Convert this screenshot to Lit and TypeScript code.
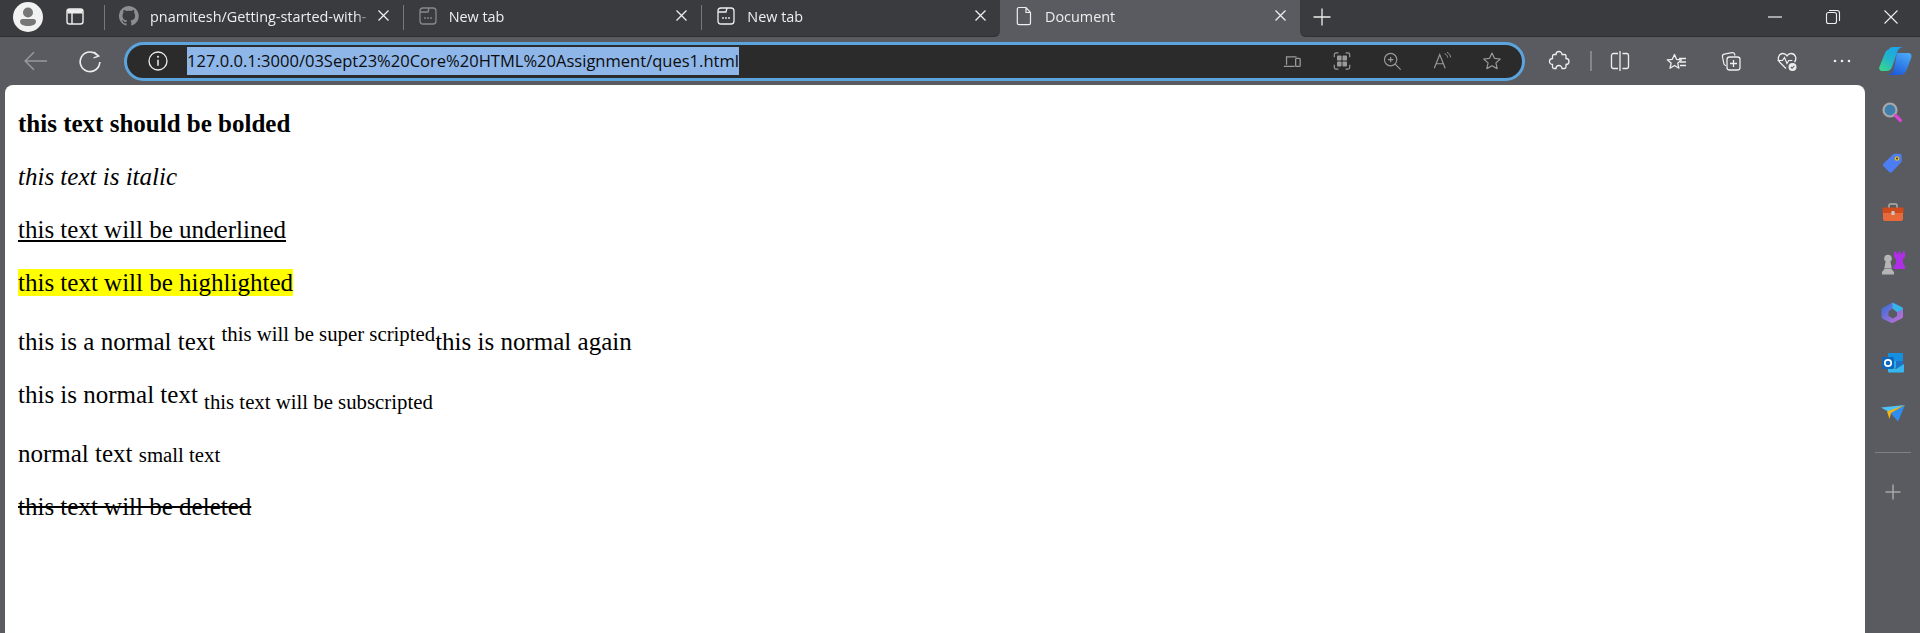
import { LitElement, html, css, svg } from "lit";
import { customElement } from "lit/decorators.js";

const ICONS: Record<string, unknown> = {
  sidebarToggle: svg`<rect x="3" y="3" width="16" height="15" rx="2.5" fill="none" stroke="#eee" stroke-width="1.4"/><path d="M3.5 7.500h15V5a1.800 1.800 0 0 0-1.800-1.800H5.300A1.800 1.800 0 0 0 3.500 5z" fill="#eee"/><path d="M8 7v11" stroke="#eee" stroke-width="1.4"/>`,
  github: svg`<path fill="#8c8d90" d="M11 1a10 10 0 0 0-3.200 19.500c.5.100.7-.2.7-.5v-1.700c-2.800.6-3.400-1.300-3.400-1.300-.5-1.200-1.100-1.500-1.100-1.500-.9-.6.1-.6.1-.6 1 .1 1.500 1 1.500 1 .9 1.500 2.300 1.100 2.900.8.100-.7.400-1.100.6-1.300-2.200-.3-4.600-1.100-4.600-5 0-1.100.4-2 1-2.700-.1-.3-.4-1.300.1-2.700 0 0 .8-.3 2.700 1a9.500 9.500 0 0 1 5 0c1.900-1.300 2.700-1 2.700-1 .5 1.400.2 2.400.1 2.700.6.7 1 1.600 1 2.700 0 3.900-2.300 4.700-4.600 5 .4.300.7.900.7 1.900V20c0 .3.200.6.700.5A10 10 0 0 0 11 1z"/>`,
  pageDim: svg`<rect x="3" y="3" width="16" height="16" rx="3" fill="none" stroke="#88898c" stroke-width="1.300"/><path d="M3 7h8l1-4" fill="none" stroke="#88898c" stroke-width="1.300"/><circle cx="8" cy="13" r=".9" fill="#88898c"/><circle cx="11" cy="13" r=".9" fill="#88898c"/><circle cx="14" cy="13" r=".9" fill="#88898c"/>`,
  pageLit: svg`<rect x="3" y="3" width="16" height="16" rx="3" fill="none" stroke="#eee" stroke-width="1.300"/><path d="M3 7h8l1-4" fill="none" stroke="#eee" stroke-width="1.300"/><circle cx="8" cy="13" r=".9" fill="#eee"/><circle cx="11" cy="13" r=".9" fill="#eee"/><circle cx="14" cy="13" r=".9" fill="#eee"/>`,
  doc: svg`<path d="M6 2.500h7l4.500 5V18a1.700 1.700 0 0 1-1.700 1.700H6A1.700 1.700 0 0 1 4.300 18V4.200A1.700 1.700 0 0 1 6 2.500zM13 2.700V7.500h4.500" fill="none" stroke="#eee" stroke-width="1.200"/>`,
  close: svg`<path d="M5.500 5.500l10 10M15.500 5.500l-10 10" stroke="#eee" stroke-width="1.300"/>`,
  plus: svg`<path d="M11 2.500v17M2.500 11h17" stroke="#eee" stroke-width="1.300"/>`,
  minimize: svg`<path d="M4 11h14" stroke="#eee" stroke-width="1.200"/>`,
  restore: svg`<rect x="4.500" y="6.500" width="10" height="11" rx="2" fill="none" stroke="#eee" stroke-width="1.100"/><path d="M7 4.500h8a2.500 2.500 0 0 1 2.500 2.500v8" fill="none" stroke="#eee" stroke-width="1.100"/>`,
  winClose: svg`<path d="M4.500 4.500l13 13M17.500 4.500l-13 13" stroke="#eee" stroke-width="1.100"/>`,
  back: svg`<path d="M2 11h20M10 3l-8 8 8 8" fill="none" stroke="#98999c" stroke-width="1.400"/>`,
  reload: svg`<path d="M17.500 5.500a9 9 0 1 0 2.500 6.500" fill="none" stroke="#eee" stroke-width="1.500"/><path d="M13.500 1.800l4.500 3.700-4.700 1.700" fill="none" stroke="#eee" stroke-width="1.300" transform="translate(1 1)"/>`,
  info: svg`<circle cx="11" cy="11" r="9" fill="none" stroke="#eee" stroke-width="1.300"/><path d="M11 9.800v6" stroke="#eee" stroke-width="1.500"/><circle cx="11" cy="6.700" r="1" fill="#eee"/>`,
  devices: svg`<path d="M5 15V6.500h11M2 17h12" fill="none" stroke="#9a9a9a" stroke-width="1.400"/><rect x="15" y="8" width="5" height="9" rx="1" fill="none" stroke="#9a9a9a" stroke-width="1.400"/>`,
  apps: svg`<path d="M2.500 7V4a2 2 0 0 1 2-2H7M15 2h2.500a2 2 0 0 1 2 2v3M19.500 15v3a2 2 0 0 1-2 2H15M7 20H4.500a2 2 0 0 1-2-2v-3" fill="none" stroke="#9a9a9a" stroke-width="1.300"/><rect x="5.500" y="5" width="5" height="5.500" rx="1" fill="#9a9a9a"/><rect x="11.500" y="5" width="5" height="5.500" rx="1" fill="#9a9a9a"/><rect x="5.500" y="11.500" width="5" height="5.500" rx="1" fill="#9a9a9a"/><rect x="11.500" y="11.500" width="5" height="5.500" rx="1" fill="#9a9a9a"/>`,
  zoomIn: svg`<circle cx="9.500" cy="9.500" r="6.800" fill="none" stroke="#9a9a9a" stroke-width="1.300"/><path d="M14.500 14.500l6 6M6.500 9.500h6M9.500 6.500v6" stroke="#9a9a9a" stroke-width="1.300"/>`,
  readAloud: svg`<path d="M2.500 19l6-15 6 15M4.700 14h7.600" fill="none" stroke="#9a9a9a" stroke-width="1.300"/><path d="M14 3c2 .8 3 2.300 3.300 4.300M16.500 1.500c2.300 1 3.700 3 4 5.500" fill="none" stroke="#9a9a9a" stroke-width="1.100"/>`,
  star: svg`<path d="M11 2.200l2.700 5.900 6.400.7-4.800 4.300 1.400 6.300L11 16.200l-5.700 3.200 1.400-6.300-4.800-4.300 6.400-.7z" fill="none" stroke="#9a9a9a" stroke-width="1.300" stroke-linejoin="round"/>`,
  puzzle: svg`<path d="M8 4.500a3 3 0 0 1 6 0h2.500a1.500 1.500 0 0 1 1.500 1.500v2.500a3 3 0 0 1 0 6V17a1.500 1.500 0 0 1-1.500 1.500H14a3 3 0 0 0-6 0H6A1.500 1.500 0 0 1 4.500 17v-2.500a3 3 0 0 1 0-6V6A1.500 1.500 0 0 1 6 4.500z" fill="none" stroke="#eee" stroke-width="1.300"/>`,
  split: svg`<path d="M9 3.500H4.500a2 2 0 0 0-2 2v11a2 2 0 0 0 2 2H9M13.500 3.500h4a2 2 0 0 1 2 2v11a2 2 0 0 1-2 2h-4M11 1v20" fill="none" stroke="#eee" stroke-width="1.300"/>`,
  favorites: svg`<path d="M9.500 3l2 4.800 5 .5-3.800 3.400 1.200 5-4.400-2.700L5 16.700l1.200-5L2.300 8.300l5-.5z" transform="translate(0 1.500)" fill="none" stroke="#eee" stroke-width="1.300" stroke-linejoin="round"/><path d="M14 8.500h7M15 12h6M15 15.500h6" stroke="#eee" stroke-width="1.300"/>`,
  collections: svg`<path d="M6 15.500c-1 0-1.700-.500-2-1.400L2.500 7c-.3-1.300.4-2.500 1.700-2.800L12 2.700c1.300-.2 2.300.4 2.700 1.600l.3 1.200" fill="none" stroke="#eee" stroke-width="1.200"/><rect x="7" y="7" width="13" height="13" rx="2.500" fill="none" stroke="#eee" stroke-width="1.300"/><path d="M13.500 10v7M10 13.500h7" stroke="#eee" stroke-width="1.300"/>`,
  health: svg`<path d="M10 18.500L4 12.500C.8 9.200 2.500 3.500 7 3.500c2 0 3.200 1 4 2.300.8-1.300 2-2.300 4-2.300 4.500 0 6.200 5 3.500 8.500" fill="none" stroke="#eee" stroke-width="1.300"/><path d="M1.500 10.500h5l2-3 2.500 6 1.800-3h3.500" fill="none" stroke="#eee" stroke-width="1.200"/><circle cx="16.500" cy="17" r="4" fill="#eee"/><path d="M14.800 17l1.300 1.300 2.200-2.500" fill="none" stroke="#5a5b60" stroke-width="1.100"/>`,
  more: svg`<circle cx="4" cy="11" r="1.300" fill="#eee"/><circle cx="11" cy="11" r="1.300" fill="#eee"/><circle cx="18" cy="11" r="1.300" fill="#eee"/>`,
  sidePlus: svg`<path d="M11 3.500v15M3.500 11h15" stroke="#a8a8a8" stroke-width="1.500"/>`,
};

// coloured ones are drawn on a 24 grid
const COLOR_ICONS: Record<string, unknown> = {
  search: svg`<circle cx="9" cy="9" r="6.500" fill="#3f7fae" stroke="#a8a8a8" stroke-width="2.200"/><path d="M14.500 14.500l5 5" stroke="#d946d6" stroke-width="3.200" stroke-linecap="round"/>`,
  tag: svg`<path d="M2.500 12.500L12 3.500c.5-.5 1-.7 1.700-.7h5c1.200 0 2 .8 2 2v5c0 .7-.2 1.200-.7 1.700l-9 9.500c-.8.800-2 .8-2.800 0l-5.700-5.700c-.8-.8-.8-2 0-2.800z" fill="#4d7df2"/><circle cx="16" cy="7.500" r="2.300" fill="#f4c20d"/><circle cx="16" cy="7.500" r="1" fill="#333"/>`,
  briefcase: svg`<path d="M8 7V4.500A1.500 1.500 0 0 1 9.500 3h5A1.500 1.500 0 0 1 16 4.500V7" fill="none" stroke="#b0b0b0" stroke-width="1.500"/><path d="M1.500 6.500h21v6h-21z" fill="#cf4a1d"/><path d="M2 12h20v6a2 2 0 0 1-2 2H4a2 2 0 0 1-2-2z" fill="#e8693a"/><rect x="10.300" y="10" width="3.400" height="4" rx="1" fill="#c8c8c8"/>`,
  chess: svg`<path d="M13 .5h2.500v2.300h2V.5h2v2.300h2V.5H24v5.500l-2 1.700V13l2 2.300V18H12.500v-2.700l2.500-2.300V7.700L13 6z" fill="#b02ee8"/><circle cx="7" cy="7.500" r="3.800" fill="#b5b5b5"/><path d="M4.500 11h5l1.300 6.500H3.200zM1 23.500v-2.500l2.500-3h7l2.500 3v2.500z" fill="#b5b5b5"/>`,
  hub: svg`<defs><linearGradient id="hbA" x1="0" y1="0" x2="1" y2="1"><stop offset="0" stop-color="#2a6fd6"/><stop offset="1" stop-color="#d06fd8"/></linearGradient></defs><path d="M11.500 1.500l9 4.500c1 .5 1.500 1.300 1.500 2.300v7c0 1-.5 1.800-1.500 2.300l-8 4c-1 .5-2 .5-3 0L2 18c-1-.5-1.500-1.300-1.500-2.300V9c0-1 .5-1.800 1.500-2.300z" fill="url(#hbA)"/><path d="M11.500 7.500L16 11v4l-4 2.500L7.500 15v-4.500z" fill="#5a5b60"/><path d="M11.500 1.500l9 4.500c1 .5 1.500 1.300 1.500 2.300L16 11l-4.500-3.500z" fill="#35b4e8"/>`,
  outlook: svg`<rect x="7" y="2" width="15" height="8" fill="#1490df"/><rect x="7" y="10" width="8" height="7" fill="#28a8ea"/><path d="M15 10h7v7h-7z" fill="#1f6fc4"/><path d="M7 13l8 5 8-5v7.500a1 1 0 0 1-1 1H8a1 1 0 0 1-1-1z" fill="#35b8f1"/><rect x="1" y="6" width="12" height="12" rx="1.500" fill="#0f66bd"/><circle cx="7" cy="12" r="3.200" fill="none" stroke="#fff" stroke-width="1.700"/>`,
  send: svg`<path d="M0 6.500L24 4 8 11z" fill="#4fc3f7"/><path d="M9.500 12L24 4 17 20.500z" fill="#2f8df2"/><path d="M6 10.500L24 4 10 12l-1.500 6z" fill="#f5b70f"/>`,
};

const icon = (name: string, size = 22) =>
  html`<svg class="ico" width=${size} height=${size} viewBox="0 0 22 22">${ICONS[name]}</svg>`;

const colorIcon = (name: string) =>
  html`<svg class="ico" width="24" height="24" viewBox="0 0 24 24">${COLOR_ICONS[name]}</svg>`;

@customElement("browser-tab")
class BrowserTab extends LitElement {
  static properties = {
    label: { type: String },
    glyph: { type: String },
  };
  declare label: string;
  declare glyph: string;

  static styles = css`
    :host {
      display: flex;
      align-items: center;
      flex: 1;
      min-width: 0;
      box-sizing: border-box;
      padding: 0 8px 2px 13px;
      height: 36px;
      font: 14.4px "Open Sans", sans-serif;
      color: #eee;
    }
    .ico { flex: none; display: block; }
    .title {
      flex: 1;
      min-width: 0;
      margin-left: 10px;
      white-space: nowrap;
      overflow: hidden;
      -webkit-mask-image: linear-gradient(to right, #000 92%, transparent);
      mask-image: linear-gradient(to right, #000 92%, transparent);
    }
  `;

  render() {
    return html`${icon(this.glyph)}
      <span class="title">${this.label}</span>
      ${icon("close")}`;
  }
}

@customElement("app-root")
export class AppRoot extends LitElement {
  static styles = css`
    :host {
      display: flex;
      flex-direction: column;
      width: 1920px;
      height: 633px;
      overflow: hidden;
      background: #5a5b60;
    }
    .ico { display: block; flex: none; }

    .tabstrip { display: flex; height: 37px; flex: none; }
    .strip-left {
      display: flex;
      align-items: center;
      box-sizing: border-box;
      width: 1000px;
      height: 37px;
      padding-bottom: 2px;
      background: #3a3b3f;
      border-bottom-right-radius: 6px;
      border-bottom: 1px solid #2e2f32;
    }
    .profile {
      width: 30px;
      height: 30px;
      margin-left: 13px;
      border-radius: 50%;
      background: #f2f2f2;
      flex: none;
    }
    .sidebar-toggle { margin-left: 21px; margin-right: 18px; }
    .tab-sep { width: 1px; height: 25px; background: #77787b; flex: none; }
    .active-tab {
      width: 300px;
      flex: none;
      display: flex;
      align-items: center;
      box-sizing: border-box;
      height: 37px;
      padding-bottom: 3px;
      background: #5a5b60;
    }
    .strip-right {
      flex: 1;
      display: flex;
      align-items: center;
      box-sizing: border-box;
      height: 37px;
      padding: 0 0 2px 11px;
      background: #3a3b3f;
      border-bottom-left-radius: 6px;
      border-bottom: 1px solid #2e2f32;
    }
    .win-controls { margin-left: auto; display: flex; gap: 36px; padding-right: 18px; }

    .toolbar { display: flex; align-items: center; height: 48px; flex: none; }
    .nav { display: flex; align-items: center; gap: 31px; padding-left: 23px; width: 124px; box-sizing: border-box; }
    .omnibox {
      width: 1401px;
      height: 39px;
      box-sizing: border-box;
      border: 3px solid #5ba4dd;
      border-radius: 20px;
      background: #2b2b2b;
      display: flex;
      align-items: center;
      padding: 0 20px 0 20px;
    }
    .url {
      margin-left: 18px;
      font: 16.55px "Open Sans", sans-serif;
      line-height: 28px;
      color: #0c0c0c;
      background: #8fb6e8;
      white-space: nowrap;
    }
    .omni-actions { margin-left: auto; display: flex; gap: 30px; }
    .tools { display: flex; align-items: center; padding-left: 23px; flex: 1; }
    .tool-sep { width: 2px; height: 20px; background: #85868a; margin: 0 17px 0 20px; }
    .tool-row { display: flex; gap: 33.5px; }
    .copilot { margin-left: 26px; }

    .main { flex: 1; display: flex; min-height: 0; }
    .page {
      flex: 1;
      margin-left: 5px;
      background: #fff;
      border-radius: 8px 8px 0 0;
      padding: 0 13px;
      font: 25px "Liberation Serif", serif;
      color: #000;
      min-width: 0;
    }
    .page p { margin: 25px 0; }
    .page p.sub-line { margin-bottom: 26px; }
    mark { background: #ff0; color: inherit; }
    sup, sub, small { font-size: 20.8px; }
    .side {
      width: 55px;
      flex: none;
      display: flex;
      flex-direction: column;
      align-items: center;
      padding-top: 16px;
      gap: 26px;
    }
    .side-sep { width: 36px; height: 1px; background: #808185; margin: 1px 0 2px; }
  `;

  render() {
    return html`
      <div class="tabstrip">
        <div class="strip-left">
          <div class="profile">
            <svg class="ico" width="30" height="30" viewBox="0 0 30 30"><circle cx="15" cy="10.500" r="5" fill="#777"/><path d="M7 19.500c0-1.500 1-2.500 2.500-2.500h11c1.500 0 2.500 1 2.500 2.500 0 3-3.500 4.500-8 4.500s-8-1.500-8-4.500z" fill="#777"/></svg>
          </div>
          <span class="sidebar-toggle">${icon("sidebarToggle")}</span>
          <div class="tab-sep"></div>
          <browser-tab label="pnamitesh/Getting-started-with-" glyph="github"></browser-tab>
          <div class="tab-sep"></div>
          <browser-tab label="New tab" glyph="pageDim"></browser-tab>
          <div class="tab-sep"></div>
          <browser-tab label="New tab" glyph="pageLit"></browser-tab>
        </div>
        <div class="active-tab"><browser-tab label="Document" glyph="doc"></browser-tab></div>
        <div class="strip-right">
          ${icon("plus")}
          <div class="win-controls">
            ${icon("minimize")}${icon("restore")}${icon("winClose")}
          </div>
        </div>
      </div>

      <div class="toolbar">
        <div class="nav">${icon("back", 24)}${icon("reload", 24)}</div>
        <div class="omnibox">
          ${icon("info")}
          <span class="url">127.0.0.1:3000/03Sept23%20Core%20HTML%20Assignment/ques1.html</span>
          <div class="omni-actions">
            ${icon("devices", 20)}${icon("apps", 20)}${icon("zoomIn", 20)}${icon("readAloud", 20)}${icon("star", 20)}
          </div>
        </div>
        <div class="tools">
          ${icon("puzzle")}
          <div class="tool-sep"></div>
          <div class="tool-row">
            ${icon("split")}${icon("favorites")}${icon("collections")}${icon("health")}${icon("more")}
          </div>
          <span class="copilot">
            <svg class="ico" width="33" height="28" viewBox="0 0 33 28">
              <defs>
                <linearGradient id="cpA" x1="0" y1="1" x2=".8" y2="0"><stop offset="0" stop-color="#3ddc84"/><stop offset=".5" stop-color="#22b5c9"/><stop offset="1" stop-color="#1ba1f1"/></linearGradient>
                <linearGradient id="cpB" x1=".8" y1="0" x2=".2" y2="1"><stop offset="0" stop-color="#4aa8f5"/><stop offset="1" stop-color="#1a56db"/></linearGradient>
              </defs>
              <path d="M18 6h11c3 0 4 2 3.300 4.500L28 22c-1.200 3.800-4 6-8 6H8c4-.5 5.700-2.500 6.700-5.500z" fill="url(#cpB)"/>
              <path d="M9.500 2.500C10.500 1 12 0 14 0h10c-3.500.5-5 2.500-6 5.500L13.500 19c-1 3-3 5-6 5H3c-2 0-3.300-1.800-2.700-3.800L6 6c.7-1.700 2-2.800 3.500-3.500z" fill="url(#cpA)"/>
            </svg>
          </span>
        </div>
      </div>

      <div class="main">
        <div class="page">
          <p><b>this text should be bolded</b></p>
          <p><i>this text is italic</i></p>
          <p><u>this text will be underlined</u></p>
          <p><mark>this text will be highlighted</mark></p>
          <p>this is a normal text <sup>this will be super scripted</sup>this is normal again</p>
          <p class="sub-line">this is normal text <sub>this text will be subscripted</sub></p>
          <p>normal text <small>small text</small></p>
          <p><del>this text will be deleted</del></p>
        </div>
        <div class="side">
          ${colorIcon("search")}${colorIcon("tag")}${colorIcon("briefcase")}${colorIcon("chess")}
          ${colorIcon("hub")}${colorIcon("outlook")}${colorIcon("send")}
          <div class="side-sep"></div>
          ${icon("sidePlus")}
        </div>
      </div>
    `;
  }
}

void BrowserTab;
